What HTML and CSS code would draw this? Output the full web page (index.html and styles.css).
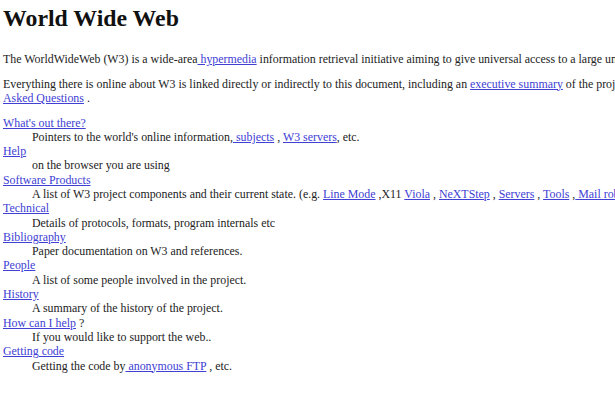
FILE: index.html
```html
<!DOCTYPE html>
<html>
<head>
<meta charset="utf-8">
<title>The World Wide Web project</title>
<link rel="stylesheet" href="styles.css">
</head>
<body>
<div class="page">
<h1 class="title">World Wide Web</h1>
<p class="lead">The WorldWideWeb (W3) is a wide-area<a href="#"> hypermedia</a> information retrieval initiative aiming to give universal access to a large universe of documents.</p>
<p class="lead">Everything there is online about W3 is linked directly or indirectly to this document, including an <a href="#">executive summary</a> of the project, <a href="#">Mailing lists</a> , <a href="#">Policy</a> , November's <a href="#">W3 news</a> , <a href="#">Frequently<br>Asked Questions</a> .</p>
<dl class="topics">
<dt><a href="#">What's out there?</a></dt>
<dd>Pointers to the world's online information,<a href="#"> subjects</a> , <a href="#">W3 servers</a>, etc.</dd>
<dt><a href="#">Help</a></dt>
<dd>on the browser you are using</dd>
<dt><a href="#">Software Products</a></dt>
<dd>A list of W3 project components and their current state. (e.g. <a href="#">Line Mode</a> ,X11 <a href="#">Viola</a> , <a href="#">NeXTStep</a> , <a href="#">Servers</a> , <a href="#">Tools</a> ,<a href="#"> Mail robot</a> ,<a href="#"> Library</a> )</dd>
<dt><a href="#">Technical</a></dt>
<dd>Details of protocols, formats, program internals etc</dd>
<dt><a href="#">Bibliography</a></dt>
<dd>Paper documentation on W3 and references.</dd>
<dt><a href="#">People</a></dt>
<dd>A list of some people involved in the project.</dd>
<dt><a href="#">History</a></dt>
<dd>A summary of the history of the project.</dd>
<dt><a href="#">How can I help</a> ?</dt>
<dd>If you would like to support the web..</dd>
<dt><a href="#">Getting code</a></dt>
<dd>Getting the code by<a href="#"> anonymous FTP</a> , etc.</dd>
</dl>
</div>
</body>
</html>
```
FILE: styles.css
```css
html, body {
  margin: 0;
  padding: 0;
  background: #ffffff;
  overflow: hidden;
}
body {
  font-family: "Liberation Serif", "Times New Roman", serif;
  font-size: 11.9px;
  line-height: 14.5px;
  color: #222222;
}
.page {
  padding: 0 0 0 3px;
  white-space: nowrap;
}
.title {
  font-size: 23.8px;
  line-height: 29px;
  font-weight: bold;
  margin: 4px 0 19px;
  color: #111111;
}
.lead {
  margin: 0 0 10px;
}
a {
  color: #4040d4;
  text-decoration: underline;
}
.topics {
  margin: 7px 0 0;
  line-height: 14.3px;
}
.topics dt {
  margin: 0;
}
.topics dd {
  margin: 0 0 0 29px;
}
```
